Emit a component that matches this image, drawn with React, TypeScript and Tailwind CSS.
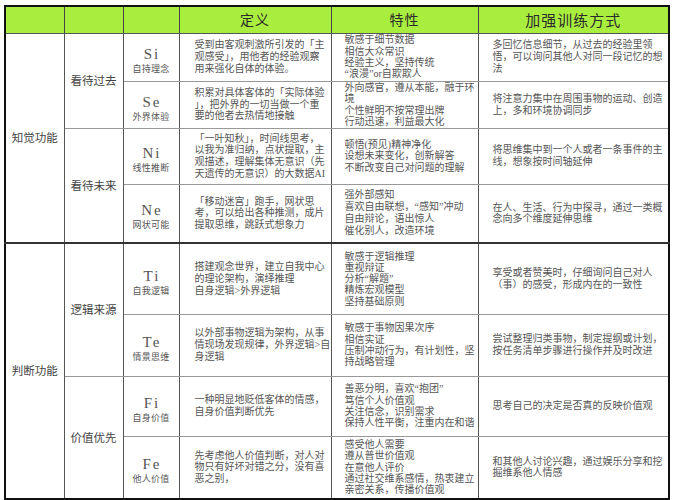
import React from "react";

type Row = {
  code: string;
  label: string;
  def: string[];
  trait: string[];
  traitLead?: string;
  train: string[];
  h: string;
};

const rows: Row[] = [
  {
    code: "Si",
    label: "自持理念",
    def: ["受到由客观刺激所引发的「主", "观感受」，用他者的经验观察", "用来强化自体的体验。"],
    trait: ["敏感于细节数据", "相信大众常识", "经验主义，坚持传统", "“浪漫”or自欺欺人"],
    train: ["多回忆信息细节，从过去的经验里领", "悟，可以询问其他人对同一段记忆的想", "法"],
    h: "h-[48px]",
  },
  {
    code: "Se",
    label: "外界体验",
    def: ["积累对具体客体的「实际体验", "」，把外界的一切当做一个重", "要的他者去热情地接触"],
    trait: ["外向感官，遵从本能，融于环", "境", "个性鲜明不按常理出牌", "行动迅速，利益最大化"],
    train: ["将注意力集中在周围事物的运动、创造", "上，多和环境协调同步"],
    h: "h-[47px]",
  },
  {
    code: "Ni",
    label: "线性推断",
    def: ["「一叶知秋」，时间线思考，", "以我为准归纳，点状提取，主", "观描述，理解集体无意识（先", "天遗传的无意识）的大数据AI"],
    trait: ["顿悟(预见)精神净化", "设想未来变化，创新解答", "不断改变自己对问题的理解"],
    train: ["将思维集中到一个人或者一条事件的主", "线，想象按时间轴延伸"],
    h: "h-[56px]",
  },
  {
    code: "Ne",
    label: "网状可能",
    def: ["「移动迷宫」跑手，网状思", "考，可以给出各种推测，成片", "提取思维，跳跃式想象力"],
    trait: ["强外部感知", "喜欢自由联想，“感知”冲动", "自由辩论，语出惊人", "催化别人，改造环境"],
    traitLead: "leading-[12px]",
    train: ["在人、生活、行为中探寻，通过一类概", "念向多个维度延伸思维"],
    h: "h-[59px]",
  },
  {
    code: "Ti",
    label: "自我逻辑",
    def: ["搭建观念世界，建立自我中心", "的理论架构，演绎推理", "自身逻辑>外界逻辑"],
    trait: ["敏感于逻辑推理", "重视辩证", "分析“解题”", "精炼宏观模型", "坚持基础原则"],
    train: ["享受或者赞美时，仔细询问自己对人", "（事）的感受，形成内在的一致性"],
    h: "h-[71px]",
  },
  {
    code: "Te",
    label: "情景思维",
    def: ["以外部事物逻辑为架构，从事", "情现场发现规律，外界逻辑>自", "身逻辑"],
    trait: ["敏感于事物因果次序", "相信实证", "压制冲动行为，有计划性，坚", "持战略管理"],
    train: ["尝试整理归类事物，制定提纲或计划，", "按任务清单步骤进行操作并及时改进"],
    h: "h-[62px]",
  },
  {
    code: "Fi",
    label: "自身价值",
    def: ["一种明显地贬低客体的情感，", "自身价值判断优先"],
    trait: ["善恶分明，喜欢“抱团”", "笃信个人价值观", "关注信念，识别需求", "保持人性平衡，注重内在和谐"],
    train: ["思考自己的决定是否真的反映价值观"],
    h: "h-[60px]",
  },
  {
    code: "Fe",
    label: "他人价值",
    def: ["先考虑他人价值判断，对人对", "物只有好坏对错之分，没有喜", "恶之别，"],
    trait: ["感受他人需要", "遵从普世价值观", "在意他人评价", "通过社交维系感情，热衷建立", "亲密关系，传播价值观"],
    train: ["和其他人讨论兴趣，通过娱乐分享和挖", "掘维系他人情感"],
    h: "h-[63px]",
  },
];

const cjk = "font-['Noto_Sans_CJK_SC',sans-serif]";
const body = "font-['Liberation_Serif','Noto_Sans_CJK_SC',serif]";
const cell = "border-x border-x-[#555] border-y border-y-[#999] align-middle p-0";

function Lines({ lines, cls }: { lines: string[]; cls: string }) {
  return (
    <div className={`${body} ${cls}`}>
      {lines.map((l, i) => (
        <div key={i} className="whitespace-nowrap">
          {l}
        </div>
      ))}
    </div>
  );
}

export default function App() {
  return (
    <div className={`w-[673px] h-[500px] bg-white pl-[4px] pt-[5px] ${cjk} text-[#4a4a4a]`}>
      <table className="table-fixed border-collapse border-2 border-[#111] w-[664px]">
        <colgroup>
          <col className="w-[59px]" />
          <col className="w-[59px]" />
          <col className="w-[56px]" />
          <col className="w-[152px]" />
          <col className="w-[147px]" />
          <col className="w-[191px]" />
        </colgroup>
        <thead>
          <tr className="h-[27px] bg-[#a9ee3f]">
            <th className="border border-[#444] border-b-[#555] p-0"></th>
            <th className="border border-[#444] border-b-[#555] p-0"></th>
            <th className="border border-[#444] border-b-[#555] p-0"></th>
            <th className="border border-[#444] border-b-[#555] p-0 text-[14px] font-normal tracking-[1px] text-[#2a2a2a]">定义</th>
            <th className="border border-[#444] border-b-[#555] p-0 text-[14px] font-normal tracking-[1px] text-[#2a2a2a]">特性</th>
            <th className="border border-[#444] border-b-[#555] p-0 text-[15px] font-normal tracking-[1px] text-[#2a2a2a]">加强训练方式</th>
          </tr>
        </thead>
        <tbody>
          {rows.map((r, i) => {
            const groupTop = i === 4 ? "border-t-2 border-t-[#333]" : "";
            return (
              <tr key={r.code} className={r.h}>
                {i === 0 && (
                  <td rowSpan={4} className={`${cell} text-center text-[11.5px] text-[#444]`}>
                    知觉功能
                  </td>
                )}
                {i === 4 && (
                  <td rowSpan={4} className={`${cell} ${groupTop} text-center text-[11.5px] text-[#444]`}>
                    判断功能
                  </td>
                )}
                {i % 2 === 0 && (
                  <td rowSpan={2} className={`${cell} ${groupTop} text-center text-[11.5px] text-[#444]`}>
                    {["看待过去", "看待未来", "逻辑来源", "价值优先"][i / 2]}
                  </td>
                )}
                <td className={`${cell} ${groupTop} text-center`}>
                  <div className="pt-[7px] flex flex-col items-center">
                    <div className="font-['Liberation_Serif',serif] text-[15px] leading-[17px] tracking-[2px] pl-[2px] text-[#555]">
                      {r.code}
                    </div>
                    <div className={`${body} text-[9px] leading-[12px] tracking-[0.3px] text-[#555]`}>{r.label}</div>
                  </div>
                </td>
                <td className={`${cell} ${groupTop}`}>
                  <Lines lines={r.def} cls="pl-[15px] text-[10px] leading-[11.7px] text-[#555]" />
                </td>
                <td className={`${cell} ${groupTop}`}>
                  <Lines
                    lines={r.trait}
                    cls={`pl-[13px] text-[10px] ${r.traitLead ?? "leading-[11.3px]"} text-[#555]`}
                  />
                </td>
                <td className={`${cell} ${groupTop}`}>
                  <Lines lines={r.train} cls="pl-[14px] text-[10px] leading-[11.7px] text-[#555]" />
                </td>
              </tr>
            );
          })}
        </tbody>
      </table>
    </div>
  );
}
